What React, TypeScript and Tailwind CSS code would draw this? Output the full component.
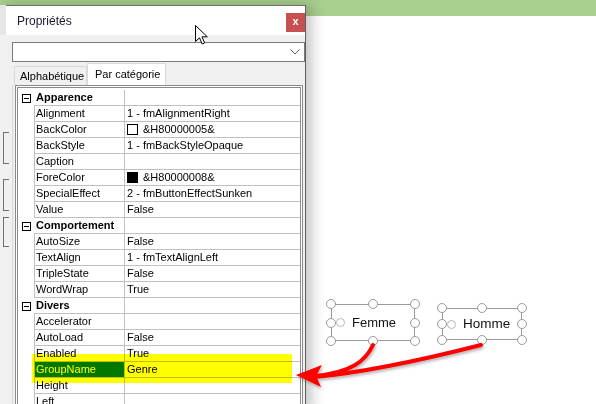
import React from 'react';

type Row =
  | { cat: string }
  | { name: string; value: string; swatch?: string; selected?: boolean };

const rows: Row[] = [
  { cat: 'Apparence' },
  { name: 'Alignment', value: '1 - fmAlignmentRight' },
  { name: 'BackColor', value: '&H80000005&', swatch: 'bg-white' },
  { name: 'BackStyle', value: '1 - fmBackStyleOpaque' },
  { name: 'Caption', value: '' },
  { name: 'ForeColor', value: '&H80000008&', swatch: 'bg-black' },
  { name: 'SpecialEffect', value: '2 - fmButtonEffectSunken' },
  { name: 'Value', value: 'False' },
  { cat: 'Comportement' },
  { name: 'AutoSize', value: 'False' },
  { name: 'TextAlign', value: '1 - fmTextAlignLeft' },
  { name: 'TripleState', value: 'False' },
  { name: 'WordWrap', value: 'True' },
  { cat: 'Divers' },
  { name: 'Accelerator', value: '' },
  { name: 'AutoLoad', value: 'False' },
  { name: 'Enabled', value: 'True' },
  { name: 'GroupName', value: 'Genre', selected: true },
  { name: 'Height', value: '' },
  { name: 'Left', value: '' },
];

const CollapseBox = () => (
  <div className="ml-[4px] w-[9px] h-[9px] border border-black bg-white flex items-center justify-center">
    <div className="w-[5px] h-[1px] bg-black" />
  </div>
);

const GridRow = ({ row }: { row: Row }) => {
  if ('cat' in row) {
    return (
      <div className="flex h-[16px]">
        <div className="w-[16px] flex items-center">
          <CollapseBox />
        </div>
        <div className="w-[90px] border-b border-[#c0c0c0] pl-[2px] font-bold leading-[15px] whitespace-nowrap">
          {row.cat}
        </div>
        <div className="flex-1 border-l border-b border-[#c0c0c0]" />
      </div>
    );
  }
  return (
    <div className="flex h-[16px]">
      <div className="w-[16px]" />
      <div
        className={
          row.selected
            ? 'w-[90px] border-l border-b border-[#c0c0c0] pl-[1px] leading-[15px] bg-[#0078d7] text-white'
            : 'w-[90px] border-l border-b border-[#c0c0c0] pl-[1px] leading-[15px]'
        }
      >
        {row.name}
      </div>
      <div className="flex-1 flex items-center border-l border-b border-[#c0c0c0] pl-[2px] leading-[15px] whitespace-nowrap">
        {row.swatch && <div className={`w-[11px] h-[11px] border border-black mr-[5px] ${row.swatch}`} />}
        {row.value}
      </div>
    </div>
  );
};

const Handle = ({ x, y }: { x: string; y: string }) => (
  <div className={`absolute w-[10px] h-[10px] rounded-full border-[1.5px] border-[#9a9a9a] bg-white ${x} ${y}`} />
);

const RadioControl = ({
  pos,
  size,
  label,
  textSize,
}: {
  pos: string;
  size: string;
  label: string;
  textSize: string;
}) => (
  <div className={`absolute border border-[#9a9a9a] ${pos} ${size}`}>
    <div className="h-full flex items-center pl-[4px]">
      <div className="w-[9px] h-[9px] rounded-full border border-[#b8b8b8] bg-white" />
      <span className={`ml-[7px] text-[#111] ${textSize}`}>{label}</span>
    </div>
    <Handle x="-left-[6px]" y="-top-[6px]" />
    <Handle x="left-[calc(50%-5px)]" y="-top-[6px]" />
    <Handle x="-right-[6px]" y="-top-[6px]" />
    <Handle x="-left-[6px]" y="top-[calc(50%-5px)]" />
    <Handle x="-right-[6px]" y="top-[calc(50%-5px)]" />
    <Handle x="-left-[6px]" y="-bottom-[6px]" />
    <Handle x="left-[calc(50%-5px)]" y="-bottom-[6px]" />
    <Handle x="-right-[6px]" y="-bottom-[6px]" />
  </div>
);

export default function App() {
  return (
    <div className="relative w-[596px] h-[404px] overflow-hidden bg-white font-['Liberation_Sans',Arial,sans-serif] text-black">
      {/* Background sheet */}
      <div className="flex flex-col h-full">
        <div className="h-[16px] bg-[#a9d08e]" />
        <div className="flex-1 bg-white" />
      </div>

      {/* Design canvas controls */}
      <RadioControl pos="left-[331px] top-[304px]" size="w-[84px] h-[37px]" label="Femme" textSize="text-[13px]" />
      <RadioControl pos="left-[442px] top-[308px]" size="w-[80px] h-[32px]" label="Homme" textSize="text-[13.5px]" />

      {/* Properties window */}
      <div className="absolute left-0 top-[5px] w-[306px] h-[410px] bg-[#f0f0f0] border-r border-[#5f5f5f] shadow-[5px_0_14px_rgba(0,0,0,0.25)] flex flex-col">
        <div className="flex h-[30px]">
          <div className="w-[6px] bg-[#e6e6e6]" />
          <div className="flex-1 bg-white border-t border-[#6f6f6f] flex justify-between">
            <span className="pl-[11px] pt-[8px] text-[12px] leading-[14px] text-[#1a1a2e]">Propriétés</span>
            <div className="mt-[7px] w-[19px] h-[19px] bg-[#c75050] text-white text-[11px] font-bold flex items-center justify-center leading-none pb-[2px]">
              x
            </div>
          </div>
        </div>

        <div className="flex-1 flex">
          {/* left edge fragments */}
          <div className="w-[12px] flex flex-col">
            <div className="mt-[97px] ml-[3px] w-[6px] h-[32px] border border-r-0 border-[#6f6f6f]" />
            <div className="mt-[15px] ml-[3px] w-[6px] h-[32px] border border-r-0 border-[#6f6f6f]" />
            <div className="mt-[6px] ml-[3px] w-[6px] h-[30px] border border-r-0 border-[#6f6f6f]" />
          </div>

          <div className="flex-1 flex flex-col">
            {/* object combo */}
            <div className="mt-[7px] w-[293px] h-[20px] border border-[#7a7a7a] bg-white flex items-center justify-end pr-[4px]">
              <svg width="10" height="6" viewBox="0 0 10 6">
                <path d="M0.5 0.5 L5 5 L9.5 0.5" fill="none" stroke="#606060" strokeWidth="1" />
              </svg>
            </div>

            {/* tabs */}
            <div className="flex items-end h-[22px] mt-[1px] text-[11px]">
              <div className="ml-[2px] w-[73px] h-[19px] border border-b-0 border-[#d9d9d9] bg-[#f0f0f0] pl-[5px] leading-[19px]">
                Alphabétique
              </div>
              <div className="w-[79px] h-[22px] border border-b-0 border-[#d9d9d9] bg-white pl-[7px] leading-[20px]">
                Par catégorie
              </div>
            </div>

            {/* grid */}
            <div className="flex-1 border-l border-[#d9d9d9] pl-[2px]">
              <div className="w-[288px] h-full border border-[#8a8a8a] p-[1px] bg-white">
                <div className="h-full border border-[#8a8a8a] pt-[2px] text-[11px]">
                  {rows.map((r, i) => (
                    <GridRow key={i} row={r} />
                  ))}
                </div>
              </div>
            </div>
          </div>
        </div>
      </div>

      {/* highlighter */}
      <div className="absolute left-[32px] top-[354px] w-[260px] h-[29px] bg-[#ffff00] mix-blend-multiply" />

      {/* red arrows */}
      <svg className="absolute left-0 top-0 pointer-events-none" width="596" height="404" viewBox="0 0 596 404">
        <defs>
          <filter id="sh" x="-10%" y="-10%" width="120%" height="130%">
            <feDropShadow dx="1" dy="2" stdDeviation="1.5" floodColor="#000" floodOpacity="0.3" />
          </filter>
        </defs>
        <g filter="url(#sh)">
          <path d="M373 345 C366 360 352 373 314 376" fill="none" stroke="#ff0000" strokeWidth="4" strokeLinecap="round" />
          <path d="M481 345 C430 358 370 372 314 377" fill="none" stroke="#ff0000" strokeWidth="4" strokeLinecap="round" />
          <polygon points="296,375 322,365 316,376 321,387" fill="#ff0000" />
        </g>
      </svg>

      {/* mouse cursor */}
      <svg className="absolute left-[195px] top-[25px] pointer-events-none" width="14" height="21" viewBox="0 0 14 21">
        <path d="M0.5 0.5 L0.5 16.5 L4.5 12.8 L7.2 19 L9.6 18 L7 11.8 L12.3 11.8 Z" fill="#fff" stroke="#000" strokeWidth="1" strokeLinejoin="round" />
      </svg>
    </div>
  );
}
